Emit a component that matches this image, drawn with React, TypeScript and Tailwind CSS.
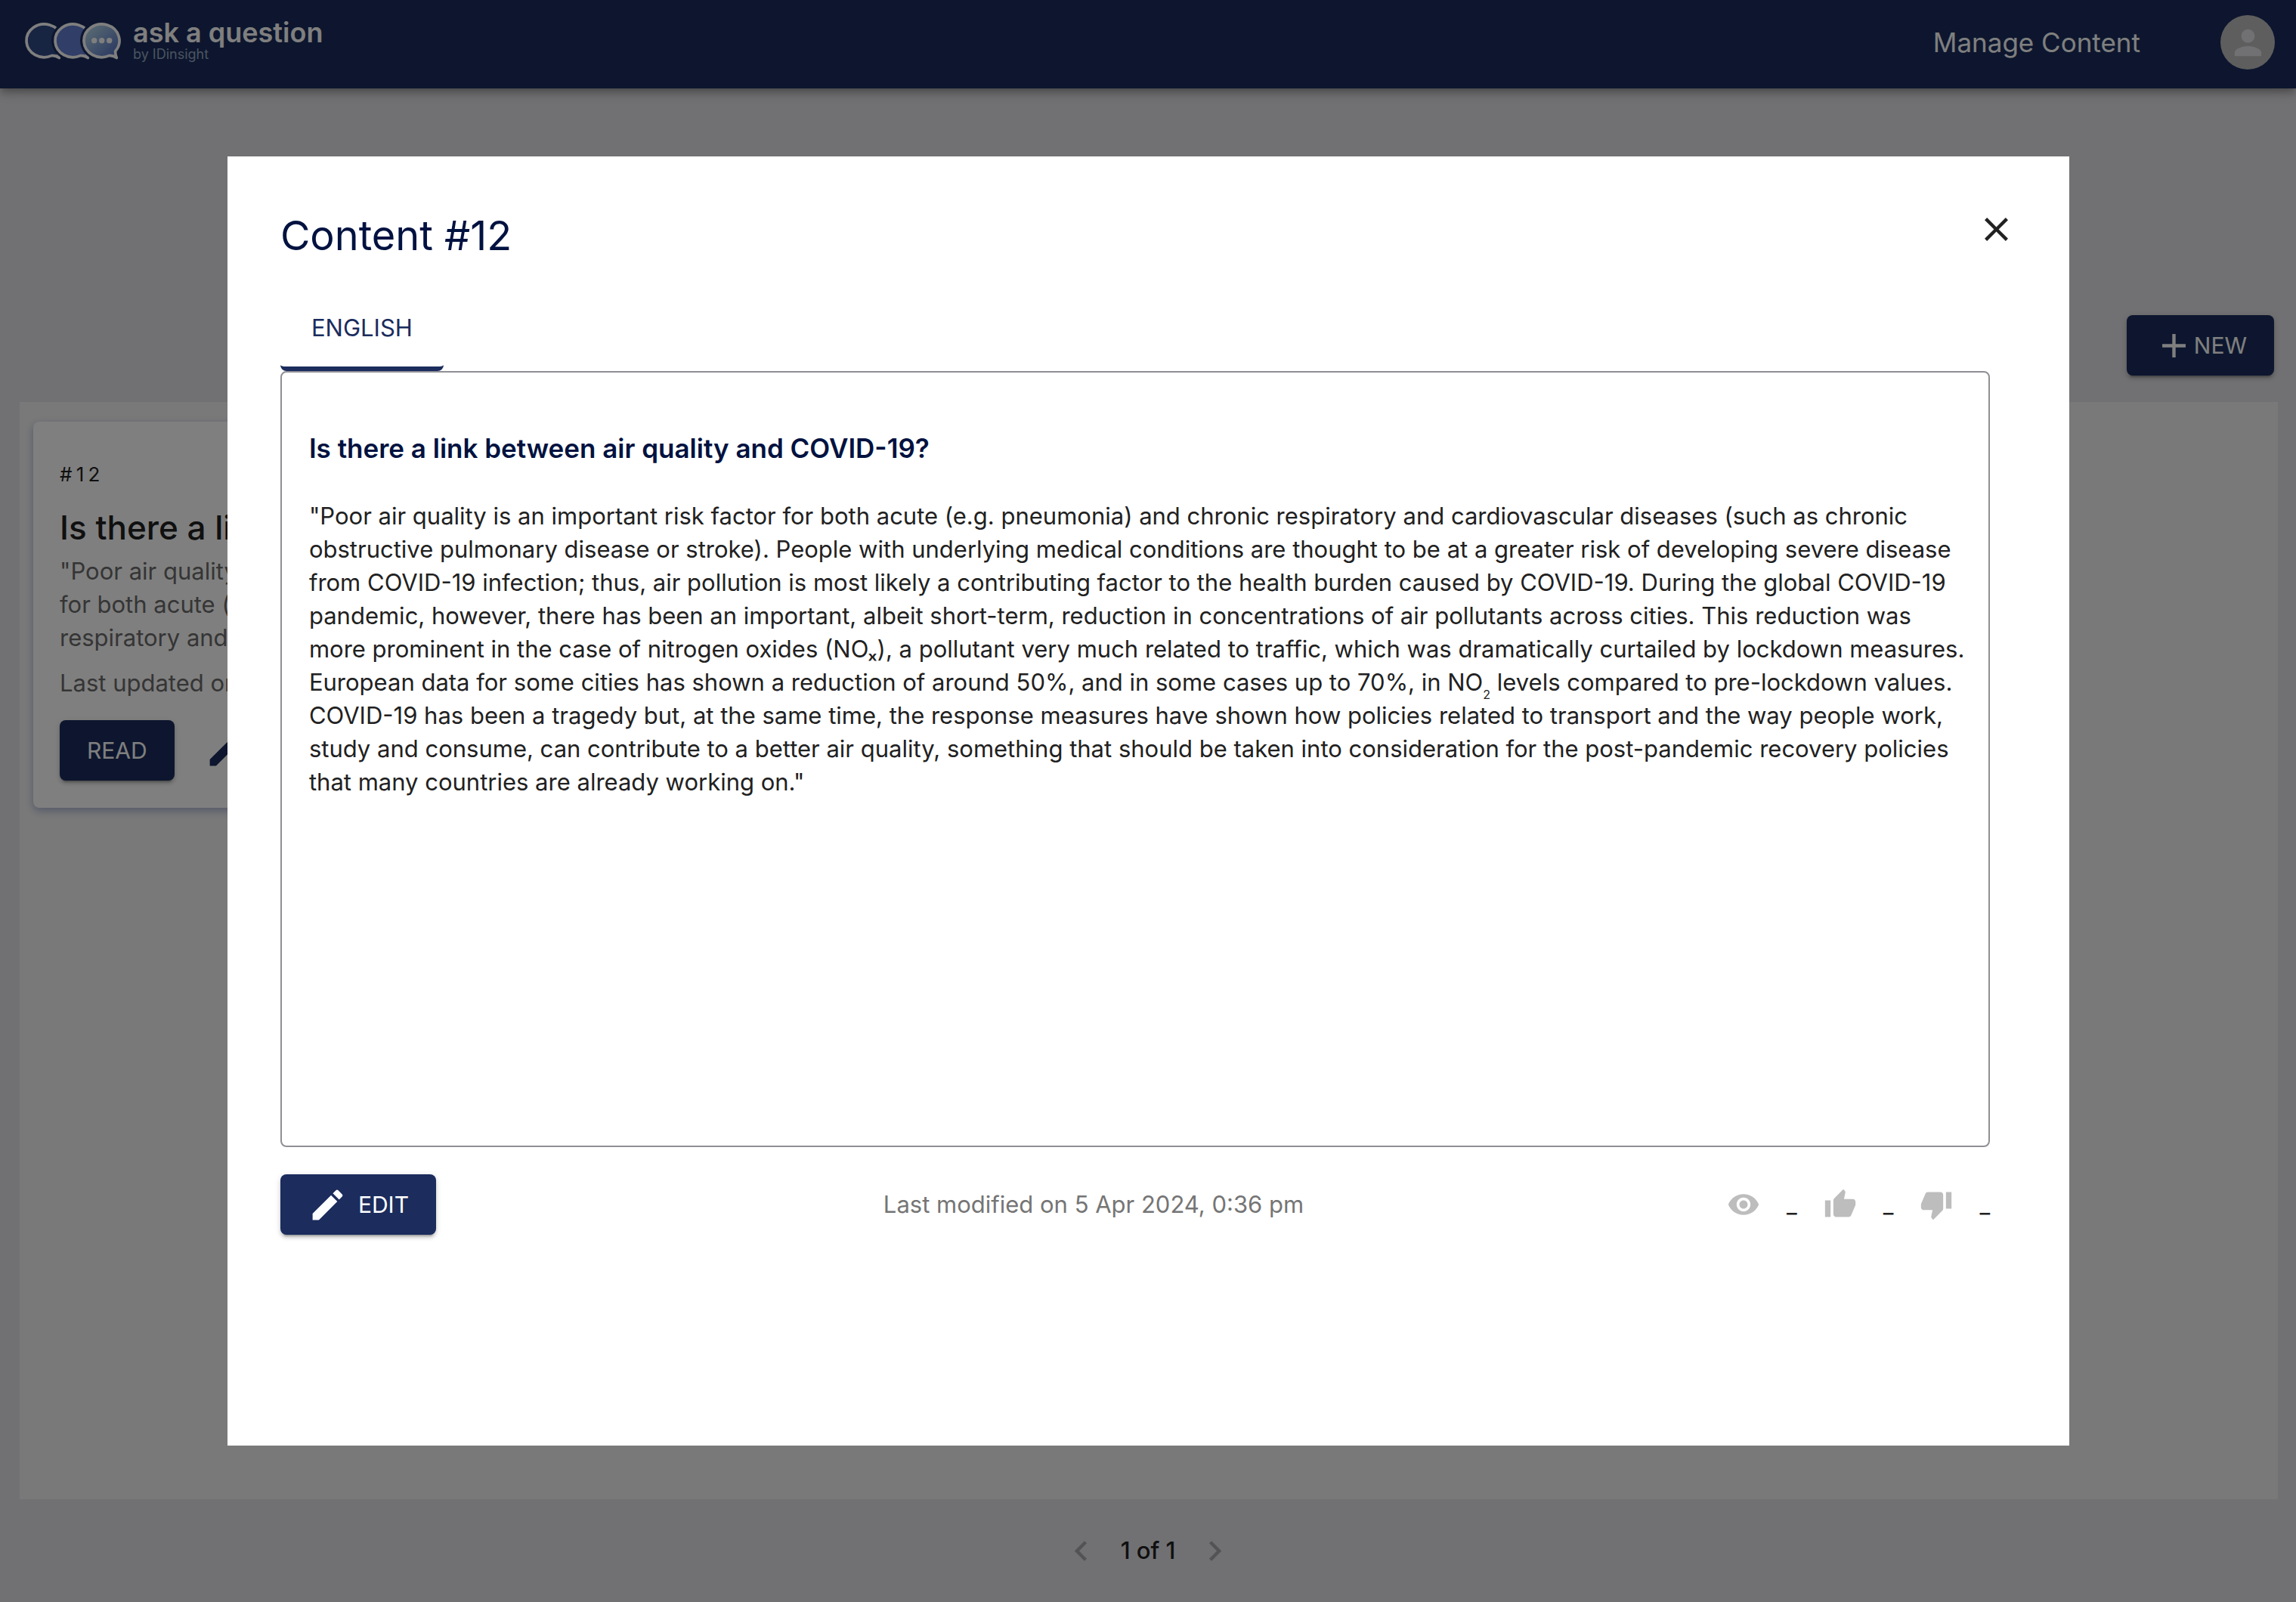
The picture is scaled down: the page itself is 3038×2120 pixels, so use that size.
import type { ReactNode } from "react";
import {
  MdAdd,
  MdChevronLeft,
  MdChevronRight,
  MdClose,
  MdEdit,
  MdPerson,
  MdThumbDown,
  MdThumbUp,
  MdVisibility,
} from "react-icons/md";

const title = "Is there a link between air quality and COVID-19?";

const body = (
  <>
    "Poor air quality is an important risk factor for both acute (e.g. pneumonia) and chronic
    respiratory and cardiovascular diseases (such as chronic obstructive pulmonary disease or
    stroke). People with underlying medical conditions are thought to be at a greater risk of
    developing severe disease from COVID-19 infection; thus, air pollution is most likely a
    contributing factor to the health burden caused by COVID-19. During the global COVID-19
    pandemic, however, there has been an important, albeit short-term, reduction in
    concentrations of air pollutants across cities. This reduction was more prominent in the
    case of nitrogen oxides (NOₓ), a pollutant very much related to traffic, which was
    dramatically curtailed by lockdown measures. European data for some cities has shown a
    reduction of around 50%, and in some cases up to 70%, in NO
    <sub className="align-sub text-[16px] leading-[0]">2</sub> levels compared to pre-lockdown
    values. COVID-19 has been a tragedy but, at the same time, the response measures have shown
    how policies related to transport and the way people work, study and consume, can
    contribute to a better air quality, something that should be taken into consideration for
    the post-pandemic recovery policies that many countries are already working on."
  </>
);

const excerpt = (
  <>
    "Poor air quality is an important risk factor
    <br />
    for both acute (e.g. pneumonia) and chronic
    <br />
    respiratory and cardiovascular diseases…
  </>
);

const buttonClass =
  "flex h-20 items-center rounded-lg bg-[#1b2c5d] px-9 text-3xl text-white shadow-[0_6px_2px_-4px_rgba(0,0,0,0.2),0_4px_4px_rgba(0,0,0,0.14),0_2px_10px_rgba(0,0,0,0.12)]";

function Bubble({ cx, fill }: { cx: number; fill: string }) {
  return (
    <g transform={`translate(${cx - 404} 0)`}>
      <ellipse cx="404" cy="167" rx="86" ry="81" fill="#1b2c5d" />
      <path
        d="M458 209Q457 222 463 236Q449 225 433 227A70.5 65.5 0 1 1 458 209Z"
        fill={fill}
        stroke="#fff"
        strokeWidth="11"
        strokeLinejoin="round"
      />
    </g>
  );
}

function Logo() {
  return (
    <div className="flex items-start gap-[14px]">
      <svg viewBox="96 84 390 165" className="mt-0.5 h-[55px] w-[130px]" aria-hidden="true">
        <defs>
          <linearGradient id="bubble" x1="0" y1="0" x2="1" y2="1">
            <stop offset="0.1" stopColor="#b4d6e6" />
            <stop offset="0.9" stopColor="#5673c4" />
          </linearGradient>
        </defs>
        <Bubble cx={176} fill="#2e4884" />
        <Bubble cx={290} fill="#607cd0" />
        <Bubble cx={404} fill="url(#bubble)" />
        <circle cx="374" cy="167" r="11" fill="#fff" />
        <circle cx="404" cy="167" r="11" fill="#fff" />
        <circle cx="434" cy="167" r="11" fill="#fff" />
      </svg>
      <div>
        <div className="text-4xl leading-[38px] font-semibold text-white">ask a question</div>
        <div className="text-lg leading-5 text-[#93a9c0]">by IDinsight</div>
      </div>
    </div>
  );
}

function Header() {
  return (
    <header className="relative flex h-[117px] items-start justify-between bg-[#1b2c5d] pt-5 pr-7 pl-8 shadow-[0_4px_8px_-2px_rgba(0,0,0,0.2),0_8px_10px_rgba(0,0,0,0.14),0_2px_20px_rgba(0,0,0,0.12)]">
      <a href="#home" className="pt-1">
        <Logo />
      </a>
      <nav className="flex items-center gap-[106px]">
        <a href="#content" className="text-[35px] text-white">
          Manage Content
        </a>
        <button
          type="button"
          aria-label="Account"
          className="flex size-[72px] items-center justify-center rounded-full bg-[#bdbdbd] text-[#e2e2e6]"
        >
          <MdPerson className="size-[53px]" />
        </button>
      </nav>
    </header>
  );
}

function ContentCard() {
  return (
    <article className="rounded-lg bg-white pt-[50px] pr-4 pb-9 pl-[35px] shadow-[0_4px_12px_#a9b0cf]">
      <p className="text-[26px] leading-10 tracking-[0.2em] text-[#212121]">#12</p>
      <h3 className="mt-[22px] truncate text-[44px] leading-[56px] font-medium text-[#212121]">{title}</h3>
      <p className="mt-2 text-[31px] leading-[44px] text-[#6b6b6b]">{excerpt}</p>
      <p className="mt-4 text-[31px] leading-[44px] text-[#6b6b6b]">Last updated on 5 Apr 2024</p>
      <div className="mt-[27px] flex items-center gap-10">
        <button type="button" className={buttonClass}>
          READ
        </button>
        <button type="button" aria-label="Edit content" className="text-[#1b2c5d]">
          <MdEdit className="size-[53px]" />
        </button>
      </div>
    </article>
  );
}

function Pager() {
  return (
    <nav aria-label="Pages" className="flex h-[136px] items-center justify-center gap-[26px]">
      <button type="button" aria-label="Previous page" className="text-[#a7a7aa]">
        <MdChevronLeft className="size-[53px]" />
      </button>
      <span className="text-[31px] font-medium text-[#212121]">1 of 1</span>
      <button type="button" aria-label="Next page" className="text-[#a7a7aa]">
        <MdChevronRight className="size-[53px]" />
      </button>
    </nav>
  );
}

function Stat({ label, children }: { label: string; children: ReactNode }) {
  return (
    <div className="flex items-center gap-[35px]" aria-label={label}>
      <span className="text-[#bdbdbd]">{children}</span>
      <span className="text-3xl">_</span>
    </div>
  );
}

function ContentDialog() {
  return (
    <div className="fixed inset-0 flex items-center justify-center bg-black/50 pl-px">
      <section
        role="dialog"
        aria-modal="true"
        aria-labelledby="dialog-title"
        className="flex h-[80.5%] w-[80.25%] flex-col bg-white pt-[70px] pr-[70px] pb-[279px] pl-[70px] text-[31px] text-[#212121]"
      >
        <div className="flex items-start justify-between">
          <h2 id="dialog-title" className="text-[54px] leading-[70px] text-[#001240]">
            Content #12
          </h2>
          <button type="button" aria-label="Close" className="text-[#212121]">
            <MdClose className="size-[53px]" />
          </button>
        </div>
        <div className="flex grow flex-col pr-[35px]">
          <div role="tablist" className="mt-[38px] flex">
            <button
              type="button"
              role="tab"
              aria-selected="true"
              className="h-[106px] rounded-lg border-b-[6px] border-[#1b2c5d] px-[41px] text-[#1b2c5d]"
            >
              ENGLISH
            </button>
          </div>
          <div role="tabpanel" className="grow rounded-lg border-2 border-[#8f8f96] pt-[78px] pr-6 pl-9">
            <h3 className="text-[35px] leading-[44px] font-semibold text-[#001240]">{title}</h3>
            <p className="mt-[46px] leading-[44px]">{body}</p>
          </div>
          <footer className="mt-9 flex items-center justify-between">
            <button type="button" className={buttonClass + " gap-[14px]"}>
              <MdEdit className="size-[53px]" />
              EDIT
            </button>
            <p className="pl-8 text-[#757575]">Last modified on 5 Apr 2024, 0:36 pm</p>
            <div className="flex gap-[35px]">
              <Stat label="Views">
                <MdVisibility className="size-11" />
              </Stat>
              <Stat label="Likes">
                <MdThumbUp className="size-11" />
              </Stat>
              <Stat label="Dislikes">
                <MdThumbDown className="size-11" />
              </Stat>
            </div>
          </footer>
        </div>
      </section>
    </div>
  );
}

export default function App() {
  return (
    <div className="flex min-h-screen flex-col bg-[#e2e2e6] font-['Inter',sans-serif]">
      <Header />
      <div className="flex h-[415px] items-end justify-end pr-[29px] pb-[35px]">
        <button type="button" className={buttonClass}>
          <MdAdd className="size-[53px]" />
          NEW
        </button>
      </div>
      <main className="mr-6 ml-[26px] grid grow grid-cols-4 items-start gap-4 bg-[#f3f3f3] px-[18px] pt-[26px]">
        <ContentCard />
      </main>
      <Pager />
      <ContentDialog />
    </div>
  );
}
